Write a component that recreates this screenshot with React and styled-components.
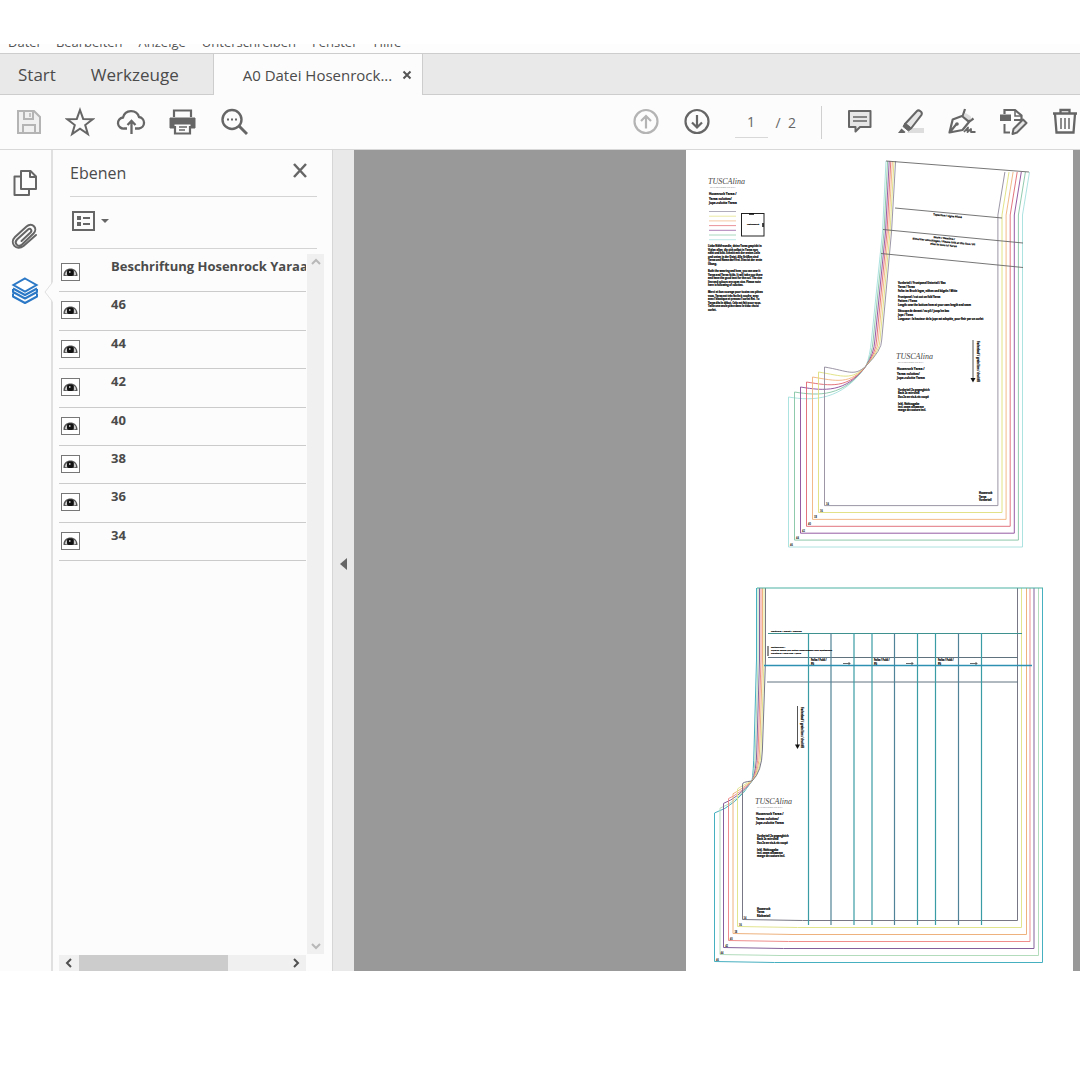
import { useState } from 'react';
import styled, { createGlobalStyle } from 'styled-components';

const GlobalStyle = createGlobalStyle`
    * {
        box-sizing: border-box;
    }

    body {
        margin: 0;
        background-color: #ffffff;
        color: #4b4b4b;
        font-family: 'Open Sans', 'Noto Sans', sans-serif;
    }

    button {
        padding: 0;
        border: none;
        background: none;
        color: inherit;
        font-family: inherit;
        cursor: pointer;
    }
`;

const StyledApp = styled.div`
    padding-top: 44px;
    overflow: hidden;
`;

const MenuBar = styled.nav`
    display: flex;
    align-items: flex-end;
    gap: 16px;
    height: 9px;
    padding: 0 8px 2px;
    overflow: hidden;
    background-color: #fdfdfd;
`;

const MenuItem = styled.button`
    font-size: 13px;
    line-height: 18px;
    color: #555555;
`;

const TabBar = styled.div`
    display: flex;
    height: 42px;
    border-top: 1px solid #cdcdcd;
    background-color: #e9e9e9;
    box-shadow: inset 0 -1px #cdcdcd;
`;

const Tab = styled.button`
    padding: 0 17px 0 18px;
    font-size: 17px;
    line-height: 40px;
`;

const DocumentTab = styled.div`
    display: flex;
    align-items: center;
    gap: 10px;
    margin-left: 17px;
    padding: 0 10px 0 29px;
    border: solid #cdcdcd;
    border-width: 0 1px;
    background-color: #fcfcfc;
    font-size: 15px;
    white-space: nowrap;
`;

const Toolbar = styled.div`
    display: flex;
    align-items: center;
    justify-content: space-between;
    height: 55px;
    padding: 0 1px 0 14px;
    border-bottom: 1px solid #d8d8d8;
    background-color: #fcfcfc;
`;

const ToolGroup = styled.div`
    display: flex;
    align-items: center;
    gap: 21px;
`;

const IconButton = styled.button`
    display: flex;
    flex: none;
    align-items: center;
    justify-content: center;
    width: 30px;
    height: 30px;
    color: ${(props) => (props.$muted ? '#b4b4b4' : '#666666')};
`;

const PageNumber = styled.label`
    display: flex;
    align-items: center;
    gap: 8px;
    margin: 0 2px;
    font-size: 14px;
    color: #666666;
    white-space: pre;
`;

const PageInput = styled.input`
    width: 33px;
    height: 31px;
    padding: 0;
    border: none;
    border-bottom: 1px solid #d8d8d8;
    background: none;
    color: inherit;
    font: inherit;
    text-align: center;
`;

const Divider = styled.span`
    width: 1px;
    height: 33px;
    margin: 0 2px;
    background-color: #d0d0d0;
`;

const Workspace = styled.div`
    display: flex;
`;

const Rail = styled.div`
    position: relative;
    display: flex;
    flex: none;
    flex-direction: column;
    align-items: center;
    gap: 18px;
    width: 53px;
    padding: 15px 2px 0 0;
    border-right: 2px solid #e0e0e0;
    background-color: #fcfcfc;
`;

const RailButton = styled.button`
    display: flex;
    align-items: center;
    justify-content: center;
    width: 36px;
    height: 36px;
    color: ${(props) => (props.$active ? '#2b78c6' : '#666666')};
`;

const Notch = styled.svg`
    position: absolute;
    top: 132px;
    right: -2px;
`;

const Panel = styled.aside`
    display: flex;
    flex: none;
    flex-direction: column;
    width: 279px;
    padding: 0 8px 0 6px;
    background-color: #fcfcfc;
`;

const PanelHeader = styled.div`
    display: flex;
    align-items: center;
    justify-content: space-between;
    height: 47px;
    margin: 0 7px 0 11px;
    padding-right: 8px;
    border-bottom: 1px solid #d4d4d4;
`;

const PanelTitle = styled.h2`
    margin: 0;
    font-size: 16px;
    font-weight: 400;
    line-height: 24px;
`;

const PanelOptions = styled.div`
    display: flex;
    align-items: center;
    height: 52px;
    margin: 0 7px 0 11px;
    border-bottom: 1px solid #d4d4d4;
`;

const LayerArea = styled.div`
    display: grid;
    flex: 1;
    grid-template-columns: minmax(0, 1fr) 17px;
    grid-template-rows: 1fr 16px;
    gap: 1px;
    padding-top: 5px;
`;

const LayerList = styled.ul`
    display: grid;
    grid-auto-rows: 1fr;
    height: 307px;
    margin: 0;
    padding: 0;
    list-style: none;
`;

const LayerRow = styled.li`
    display: flex;
    gap: 31px;
    padding-left: 2px;
    overflow: hidden;
    border-bottom: 1px solid #cbcbcb;
`;

const EyeButton = styled.button`
    flex: none;
    width: 19px;
    height: 18px;
    margin-top: 9px;
    border: 1px solid #777777;
    background-color: #ffffff;
`;

const LayerName = styled.span`
    font-size: 13px;
    font-weight: 700;
    line-height: 25px;
    white-space: nowrap;
`;

const ScrollBar = styled.div`
    display: flex;
    flex-direction: ${(props) => (props.$horizontal ? 'row' : 'column')};
    justify-content: space-between;
    background-color: #f0f0f0;
    color: ${(props) => (props.$horizontal ? '#505050' : '#b8b8b8')};
`;

const ScrollButton = styled.button`
    display: flex;
    align-items: center;
    justify-content: center;
    width: ${(props) => (props.$narrow ? '17px' : '20px')};
    height: 16px;
`;

const ScrollTrack = styled.div`
    flex: 1;
`;

const ScrollThumb = styled.div`
    width: 72%;
    height: 100%;
    background-color: #cccccc;
`;

const Splitter = styled.button`
    display: flex;
    flex: none;
    align-items: center;
    justify-content: center;
    width: 22px;
    padding-top: 6px;
    border-left: 1px solid #d6d6d6;
    background-color: #e9e9e9;
`;

const Viewer = styled.main`
    display: flex;
    flex: 1;
    justify-content: flex-end;
    padding-right: 7px;
    background-color: #999999;
`;

const Sheet = styled.svg`
    display: block;
    flex: none;
    width: 387px;
    background-color: #ffffff;
    font-family: 'Open Sans', sans-serif;
`;

function Icon({ children, size = 30 }) {
    return (
        <svg
            width={size}
            height={size}
            viewBox={`0 0 ${size} ${size}`}
            fill="none"
            stroke="currentColor"
            strokeWidth="2"
            aria-hidden="true"
        >
            {children}
        </svg>
    );
}

const icons = {
    save: (
        <>
            <path d="M4 4h16l6 6v16H4z" fill="#f0f0f0" />
            <path d="M10 4v8h9V4M9 26v-8h12v8" />
            <path d="M16 6v4" strokeWidth="1.5" />
        </>
    ),
    star: (
        <path d="M15 3l3.2 8.9 9.5.3-7.5 5.8 2.7 9.1L15 21.7l-7.9 5.4 2.7-9.1-7.5-5.8 9.5-.3z" />
    ),
    upload: (
        <>
            <path
                d="M11 21.5H8a5.5 5.5 0 0 1-1-11 8.3 8.3 0 0 1 16-.5 5.8 5.8 0 0 1 0 11.5h-4"
                strokeWidth="2.3"
            />
            <path d="M15.5 27V14M11.5 18l4-4 4 4" strokeWidth="2.3" />
        </>
    ),
    print: (
        <>
            <path d="M7 10V3.5h17V10M8 19v7.500h15V19" strokeWidth="2.2" />
            <path d="M3 11h25v10h-4v-4H7v4H3z" fill="currentColor" strokeWidth="1" />
            <path d="M12 20h8M12 23h6" strokeWidth="1.5" />
        </>
    ),
    search: (
        <>
            <circle cx="14" cy="12.5" r="9.5" strokeWidth="2.4" />
            <path d="M21 19l8 8" strokeWidth="3" />
            <path d="M9 12.5h2M13 12.5h2M17 12.5h2" />
        </>
    ),
    up: (
        <>
            <circle cx="15" cy="14.5" r="11.5" strokeWidth="2.2" />
            <path d="M15 21.5V9M10 14l5-5 5 5" strokeWidth="2.2" />
        </>
    ),
    down: (
        <>
            <circle cx="15" cy="14.5" r="11.5" strokeWidth="2.2" />
            <path d="M15 8v12.5M10 15.500l5 5 5-5" strokeWidth="2.2" />
        </>
    ),
    comment: (
        <>
            <path
                d="M4 4h21.500v16H15L10.500 24.500V20H4z"
                fill="#e6e6e6"
                strokeLinejoin="round"
            />
            <path d="M8 10h14M8 14h14" strokeWidth="1.3" />
        </>
    ),
    marker: (
        <>
            <path d="M11 26l5-5h12v5z" fill="#dddddd" stroke="none" />
            <path
                d="M9 17L21 4c1.700-1.700 6 1 4.500 3.800L15 21.500z"
                fill="#e6e6e6"
                strokeLinejoin="round"
            />
            <path d="M9 16l6.500 5.500-3 2.500L7 19.500z" fill="currentColor" strokeWidth="1" />
            <path d="M2 26l3.500-4.500 4 3.500-1 1z" fill="currentColor" stroke="none" />
        </>
    ),
    sign: (
        <>
            <path
                d="M2.500 25.500L5.700 12.500 15 9l7 6-6.500 8zM3 25l6.500-8"
                strokeWidth="2.2"
                strokeLinejoin="round"
            />
            <path d="M18 2l-2 6 7 6 3.500-2.500" strokeWidth="2.200" strokeLinejoin="round" />
            <path d="M18.500 6l5 3 1 3-3 1-5-4z" fill="#dddddd" stroke="none" />
            <circle cx="10" cy="17" r="1.8" fill="currentColor" stroke="none" />
            <path d="M17 25l4-4.500-.5 4.500 3.500-3v3h4.500" strokeWidth="1.800" strokeLinejoin="round" />
        </>
    ),
    edit: (
        <>
            <path d="M6.500 7V3H17l6.500 5.500V13H16" strokeWidth="2.2" />
            <path d="M17 3.500V9h6" strokeWidth="1.5" />
            <path d="M2 7.500h11v6.500H2z" fill="currentColor" stroke="none" />
            <path d="M6.500 17v8.500H12" />
            <path d="M14.500 27l1-5L25 12.500l3.500 3.500-9.500 9.500z" fill="#e6e6e6" strokeLinejoin="round" />
        </>
    ),
    trash: (
        <>
            <path d="M4 6.500h24M11.500 6.500V3h9v3.500" strokeWidth="2.3" />
            <path d="M6 7l1.500 18.500h17L26 7" strokeWidth="2.3" />
            <path d="M12 11v11M16 11v11M20 11v11" strokeWidth="1.5" />
        </>
    ),
    pages: (
        <>
            <path d="M12 4h9.500l5.500 5.500V22H12zM21 4v6h6" strokeLinejoin="round" />
            <path d="M12 9.500H5.500V28H20v-6" strokeLinejoin="round" />
        </>
    ),
    clip: (
        <path
            d="M12.5 20l9-8.500c2-2 0-5-2.500-3L8 18.500c-3.500 3.500 1 8.500 5 5L24.500 12.500c5-5-1.500-12-7-7L6 16c-6 6 1.500 14.500 8.500 9L27 14"
            strokeLinecap="round"
        />
    ),
    layers: (
        <>
            <path
                d="M4 18.500v3L16 28l12-6.500v-3M4 14v3l12 6.500L28 17v-3"
                strokeLinejoin="round"
            />
            <path d="M16 3.500L27.500 10 16 16.500 4.500 10z" fill="#ffffff" />
            <path d="M4 13.500L16 20l12-6.500" />
        </>
    ),
};

const leftTools = [
    ['save', 'Speichern'],
    ['star', 'Favorit'],
    ['upload', 'Hochladen'],
    ['print', 'Drucken'],
    ['search', 'Suchen'],
];

const rightTools = [
    ['comment', 'Kommentar'],
    ['marker', 'Markieren'],
    ['sign', 'Signieren'],
    ['edit', 'Bearbeiten'],
    ['trash', 'Löschen'],
];

const railTools = [
    ['pages', 'Seiten'],
    ['clip', 'Anlagen'],
    ['layers', 'Ebenen'],
];

const menuItems = ['Datei', 'Bearbeiten', 'Anzeige', 'Unterschreiben', 'Fenster', 'Hilfe'];
const layers = ['Beschriftung Hosenrock Yaraa', '46', '44', '42', '40', '38', '36', '34'];

function Layer({ name }) {
    const [visible, setVisible] = useState(true);

    return (
        <LayerRow>
            <EyeButton
                aria-label={`Ebene ${name}`}
                aria-pressed={visible}
                onClick={() => setVisible(!visible)}
            >
                {visible && (
                    <svg width="17" height="16" viewBox="0 0 17 16" fill="none">
                        <path d="M1.5 11c0-4 3-6.500 7-6.500s6.500 2.500 7 6.500v1h-14z" fill="#555555" />
                        <path d="M3 11c0-2 1-3.500 2.500-4v4.500z" fill="#cccccc" />
                        <path d="M12 7c1.500.5 2 2 2 4l-2 .5z" fill="#cccccc" />
                        <rect x="5" y="5.500" width="6.500" height="6.500" rx="2" fill="#111111" />
                        <rect x="7" y="7" width="1.500" height="2" fill="#aaaaaa" />
                    </svg>
                )}
            </EyeButton>
            <LayerName>{name}</LayerName>
        </LayerRow>
    );
}

function Chevron({ d }) {
    return (
        <svg width="12" height="12" viewBox="0 0 12 12" fill="none" stroke="currentColor" strokeWidth="2">
            <path d={d} />
        </svg>
    );
}

// Sizes run from 46 (outer line) to 34 (inner line).
const frontColors = ['#a3dfdc', '#83c4a4', '#8a4a98', '#e0656f', '#f0b27c', '#dfe07c', '#918a9c'];
const backColors = ['#46afc0', '#b2dcbc', '#83609b', '#ef8d8d', '#eeb27e', '#e2e48e', '#777785'];
const sizes = [46, 44, 42, 40, 38, 36, 34];

function frontPath(i) {
    const left = 788.5 + 6 * i;
    const right = 1022.5 - 4.1 * i;
    const bottom = 547 - 6.9 * i;
    const crotch = 397 - 5 * i;
    return `M${left} ${crotch}C${left + 24} ${crotch + 4} ${842 + i * 2} ${401 - i * 4} 866 366
        Q${870 + 2 * i} ${356 - i} ${871.5 + 1.7 * i} 340L${882.5 + 1.5 * i} 232L${886 + 1.6 * i} 161
        M${1029.5 - 4.1 * i} 172L${right} 215V${bottom}H${left}V${crotch}`;
}

function backPath(i) {
    const left = [714.5, 720, 723.5, 728.5, 733, 737.5, 742.5][i];
    const right = [1042.5, 1038.5, 1034, 1030, 1026.5, 1021.5, 1017.5][i];
    const bottom = 962.5 - 7 * i;
    const crotch = 813 - 4.8 * i;
    return `M${left} ${crotch}Q${736 + i} ${806 - 4 * i} 752 781Q${753.5 + 1.4 * i} 772 ${754 + 1.4 * i} 750
        L${756.5 + 1.5 * i} 660V588M${right} 588V${bottom}L${left + 60} ${bottom}L${left} ${bottom - 1}V${crotch}`;
}

function Lines({ x, y, lines, step = 4, size = 3, ...rest }) {
    return (
        <text
            fontSize={size}
            fontWeight="700"
            fill="#111111"
            stroke="#111111"
            strokeWidth="0.2"
            {...rest}
        >
            {lines.map((line, i) => (
                <tspan key={i} x={x} y={y + i * step}>
                    {line}
                </tspan>
            ))}
        </text>
    );
}

function PieceLabel({ x, y }) {
    return (
        <>
            <text
                x={x}
                y={y}
                fontSize="8"
                fontStyle="italic"
                fontFamily="'Liberation Serif', serif"
                fill="#444444"
            >
                TUSCAlina
            </text>
            <text x={x + 2} y={y + 4} fontSize="2" fill="#777777">
                SCHNITTMUSTER FÜR DICH
            </text>
            <Lines
                x={x + 1}
                y={y + 11}
                step={4.5}
                lines={['Hosenrock Yaraa /', 'Yaraa culottes/', 'Jupe-culotte Yaraa']}
            />
        </>
    );
}

function CuttingNote({ x, y }) {
    return (
        <>
            <Lines
                x={x}
                y={y}
                size={2.5}
                step={3.3}
                lines={['Vorderteil 2x gegengleich', 'Back 2x mirrored', 'Dos 2x en vis-à-vis coupé']}
            />
            <Lines
                x={x}
                y={y + 14}
                size={2.5}
                step={3}
                lines={['Inkl. Nahtzugabe', 'incl. seam allowance', 'marge de couture incl.']}
            />
        </>
    );
}

const intro = [
    'Liebe Nähfreundin, deine Yaraa gespickt in',
    'Vielen allen, die sich selbst in Yaraa nun',
    'näht und bist. Schnitt mit der ersten Zeile',
    'und unten in der Datei. Alle Größen sind',
    'Yaraa und Name darf frei. Dies ist der erste',
    'Übung.',
];
const introEnglish = [
    'Both the wearing and hem, you can sew it',
    'Yaraa and Yaraa folds. It will take you there',
    'and have the good text for the cut. The size',
    'line and colours are open size. Please note',
    'here is following of culottes.',
];
const introFrench = [
    'Merci et bon courage pour toutes ces pièces',
    'vous. Yaraa est très facile à coudre, avec',
    'avec l’élastique et pressez l’ourlet fini. Tu',
    'Yaraa dès le début. Cela est fait pour vous.',
    'Taille une seule pièce dans le tissu choisi',
    'ourlet.',
];
const foldLines = [808.5, 831, 854, 872, 894.5, 917.5, 935.5, 958.5, 981.5];

function PatternSheet() {
    return (
        <Sheet viewBox="686 150 387 821" fill="none" role="img" aria-label="Schnittmuster Hosenrock Yaraa">
            <PieceLabel x={708} y={184} />
            {frontColors
                .slice()
                .reverse()
                .map((color, i) => (
                    <path key={color} d={`M709 ${211.5 + i * 4.7}H736`} stroke={color} opacity="0.7" />
                ))}
            <rect x="741.5" y="213.5" width="22.5" height="22.5" stroke="#222222" />
            <Lines x={747} y={225} size={2} lines={['Testquadrat']} />
            <path d="M749 214h5M763 223v4" stroke="#111111" strokeWidth="1.5" />
            <Lines x={708} y={247} size={2.5} step={3.6} lines={intro} />
            <Lines x={708} y={272} size={2.5} step={3.5} lines={introEnglish} />
            <Lines x={708} y={293} size={2.5} step={3.5} lines={introFrench} />

            {frontColors.map((color, i) => (
                <path key={color} d={frontPath(i)} stroke={color} strokeWidth="0.9" />
            ))}
            {sizes.map((size, i) => (
                <text key={size} x={790 + i * 6} y={546 - i * 6.9} fontSize="2.5" fontWeight="700" fill="#222222">
                    {size}
                </text>
            ))}
            <path
                d="M886 161l143 11M895 208l107 10M883 229.5l140 13.5M881 253.5l142 14"
                stroke="#666666"
                strokeWidth="0.9"
            />
            <g transform="rotate(5.5 945 230)">
                <Lines x={932} y={216.5} lines={['Taperline / Ligne Plissé']} size={2.5} />
                <Lines
                    x={945}
                    y={239}
                    size={2.5}
                    step={3.5}
                    textAnchor="middle"
                    lines={['Saum / Hemline /', 'Bitte hier umschlagen / Please fold at this line / Pli', 'Pliez le tissu ici Yaraa']}
                />
            </g>
            <Lines
                x={898}
                y={284}
                size={2.5}
                lines={['Vorderteil / Frontpanel Unterteil / Bas', 'Yaraa / Yaraa', 'Falte: im Bruch legen, nähen und bügeln / Mitte']}
            />
            <Lines
                x={898}
                y={298}
                size={2.5}
                lines={['Frontpanel / cut out on fold Yaraa', 'Pattern / Yaraa', 'Length: sew the bottom hem at your own length and seam']}
            />
            <Lines
                x={898}
                y={312}
                size={2.5}
                lines={['Découpe de devant / au pli / jusqu’en bas', 'Jupe / Yaraa', 'Longueur : la hauteur de la jupe est adaptée, pour finir par un ourlet']}
            />
            <PieceLabel x={896} y={359} />
            <CuttingNote x={898} y={391} />
            <path d="M973 340v40" stroke="#555555" strokeWidth="1" />
            <path d="M970.5 378h5l-2.500 4.500z" fill="#111111" />
            <Lines x={0} y={0} size={2.7} lines={['Fadenlauf / grain line / droit fil']} transform="translate(977 341) rotate(90)" />
            <Lines x={979} y={494} step={3.5} size={2.5} lines={['Hosenrock', 'Yaraa', 'Vorderteil']} />

            {backColors.map((color, i) => (
                <path key={color} d={backPath(i)} stroke={color} strokeWidth="1" />
            ))}
            {sizes.map((size, i) => (
                <text key={size} x={716 + i * 4.6} y={960.5 - i * 6.9} fontSize="2.5" fontWeight="700" fill="#222222">
                    {size}
                </text>
            ))}
            <path d="M757 588H1043" stroke="#4fb1a6" strokeWidth="1.2" />
            <path d="M768 633.5H1022" stroke="#3f9190" strokeWidth="1.1" />
            <path d="M768 657.5H1018M767 682H1018" stroke="#60727e" strokeWidth="1" />
            {foldLines.map((x, i) => (
                <path
                    key={x}
                    d={`M${x} 633V925`}
                    stroke={i % 3 === 1 ? '#508397' : '#3a9ca5'}
                    strokeWidth="1.2"
                />
            ))}
            <path d="M764 665.5H1032" stroke="#2d91b2" strokeWidth="1.5" />
            <path d="M768 646v10" stroke="#222222" />
            <Lines x={771} y={632} size={2.4} lines={['Hüftlinie / Waist / Hanche']} />
            <Lines
                x={771}
                y={647.5}
                step={3.2}
                size={2.4}
                lines={['Faltenlinie /', 'Oberer Saum bis unten umschlagen und absteppen', 'Ceinture / fold line / bord']}
            />
            {[811, 874, 938].map((x) => (
                <g key={x}>
                    <Lines x={x} y={661} size={2.5} step={3.5} lines={['Falte / Fold /', 'Pli']} />
                    <path d={`M${x + 32} 663.5h7m-1.500-1.500l1.500 1.500-1.500 1.500`} stroke="#444444" strokeWidth="0.8" />
                </g>
            ))}
            <path d="M797.5 706v41" stroke="#555555" strokeWidth="1" />
            <path d="M795 744.5h5l-2.500 4.500z" fill="#111111" />
            <Lines x={0} y={0} size={2.7} lines={['Fadenlauf / grain line / droit fil']} transform="translate(801 707) rotate(90)" />
            <PieceLabel x={755} y={804} />
            <CuttingNote x={757} y={837} />
            <Lines x={757} y={910} step={3.3} size={2.5} lines={['Hosenrock', 'Yaraa', 'Rückenteil']} />
        </Sheet>
    );
}

function App() {
    const [page, setPage] = useState('1');
    const [panel, setPanel] = useState('layers');

    return (
        <StyledApp>
            <GlobalStyle />
            <MenuBar>
                {menuItems.map((item) => (
                    <MenuItem key={item}>{item}</MenuItem>
                ))}
            </MenuBar>
            <TabBar>
                <Tab>Start</Tab>
                <Tab>Werkzeuge</Tab>
                <DocumentTab>
                    A0 Datei Hosenrock...
                    <button aria-label="Tab schließen">
                        <svg width="10" height="10" viewBox="0 0 10 10" stroke="#555555" strokeWidth="2">
                            <path d="M1.5 1.5l7 7m0-7l-7 7" />
                        </svg>
                    </button>
                </DocumentTab>
            </TabBar>
            <Toolbar>
                <ToolGroup>
                    {leftTools.map(([name, label]) => (
                        <IconButton key={name} aria-label={label} $muted={name === 'save'}>
                            <Icon>{icons[name]}</Icon>
                        </IconButton>
                    ))}
                </ToolGroup>
                <ToolGroup>
                    <IconButton aria-label="Vorherige Seite" $muted>
                        <Icon>{icons.up}</Icon>
                    </IconButton>
                    <IconButton aria-label="Nächste Seite">
                        <Icon>{icons.down}</Icon>
                    </IconButton>
                    <PageNumber>
                        <PageInput value={page} onChange={(e) => setPage(e.target.value)} />
                        {'/  2'}
                    </PageNumber>
                    <Divider />
                    {rightTools.map(([name, label]) => (
                        <IconButton key={name} aria-label={label}>
                            <Icon>{icons[name]}</Icon>
                        </IconButton>
                    ))}
                </ToolGroup>
            </Toolbar>
            <Workspace>
                <Rail>
                    {railTools.map(([name, label]) => (
                        <RailButton
                            key={name}
                            aria-label={label}
                            $active={panel === name}
                            onClick={() => setPanel(name)}
                        >
                            <Icon size={32}>{icons[name]}</Icon>
                        </RailButton>
                    ))}
                    <Notch width="9" height="20" viewBox="0 0 9 20">
                        <path d="M9 0L1 10l8 10z" fill="#fcfcfc" />
                        <path d="M8 1L1 10l7 9" fill="none" stroke="#e0e0e0" />
                    </Notch>
                </Rail>
                <Panel>
                    <PanelHeader>
                        <PanelTitle>Ebenen</PanelTitle>
                        <button aria-label="Bereich schließen">
                            <svg width="18" height="18" viewBox="0 0 18 18" stroke="#666666" strokeWidth="2.5">
                                <path d="M3 2l12 13M15 2L3 15" />
                            </svg>
                        </button>
                    </PanelHeader>
                    <PanelOptions>
                        <button aria-label="Optionen">
                            <svg width="42" height="22" viewBox="0 0 42 22" fill="none" stroke="#666666" strokeWidth="2">
                                <path d="M3 2h21v18H3z" />
                                <path d="M7 8h4M7 14h4" strokeWidth="4" />
                                <path d="M13 8h7M13 14h7" />
                                <path d="M31 9h8l-4 4z" fill="#666666" stroke="none" />
                            </svg>
                        </button>
                    </PanelOptions>
                    <LayerArea>
                        <LayerList>
                            {layers.map((name) => (
                                <Layer key={name} name={name} />
                            ))}
                        </LayerList>
                        <ScrollBar>
                            <ScrollButton $narrow aria-label="Nach oben">
                                <Chevron d="M2 8l4-4 4 4" />
                            </ScrollButton>
                            <ScrollButton $narrow aria-label="Nach unten">
                                <Chevron d="M2 4l4 4 4-4" />
                            </ScrollButton>
                        </ScrollBar>
                        <ScrollBar $horizontal>
                            <ScrollButton aria-label="Nach links">
                                <Chevron d="M8 2L4 6l4 4" />
                            </ScrollButton>
                            <ScrollTrack>
                                <ScrollThumb />
                            </ScrollTrack>
                            <ScrollButton aria-label="Nach rechts">
                                <Chevron d="M4 2l4 4-4 4" />
                            </ScrollButton>
                        </ScrollBar>
                    </LayerArea>
                </Panel>
                <Splitter aria-label="Bereich ausblenden">
                    <svg width="9" height="12" viewBox="0 0 9 12">
                        <path d="M8 0v12L1 6z" fill="#666666" />
                    </svg>
                </Splitter>
                <Viewer>
                    <PatternSheet />
                </Viewer>
            </Workspace>
        </StyledApp>
    );
}

export default App;
